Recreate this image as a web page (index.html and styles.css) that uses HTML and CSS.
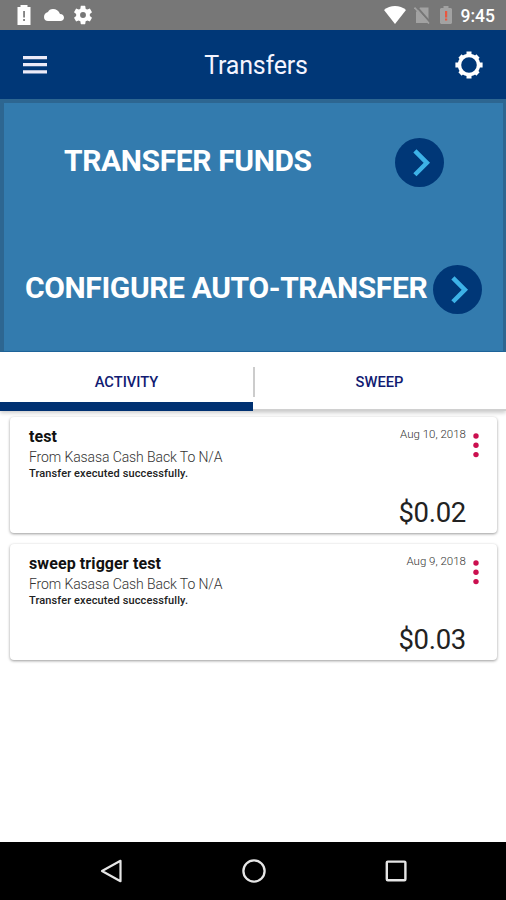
FILE: index.html
```html
<!DOCTYPE html>
<html lang="en">
<head>
  <meta charset="UTF-8">
  <meta name="viewport" content="width=device-width, initial-scale=1.0">
  <title>Transfers</title>
  <link rel="stylesheet" href="styles.css">
</head>
<body>
  <div class="status-bar">
    <div class="status-left">
      <svg width="14" height="20" viewBox="0 0 14 20"><path fill="#fff" d="M.5 2H3.500V0h7v2h3v18H.5z"/><path fill="#777" d="M6.200 6h1.700v6.500H6.200zM6.200 14h1.700v2H6.200z"/></svg>
      <svg width="20" height="12" viewBox="0 0 20 12"><path fill="#fff" d="M16 5C14.800 1.500 12 0 9 0 6.500 0 4.800 1.300 4 3 1.500 3.500 0 5.500 0 8c0 2.500 1.500 4 4 4h12.500c2 0 3.500-1.200 3.500-3.200C20 6.500 18.500 5 16 5z"/></svg>
      <svg width="22" height="22" viewBox="0 0 24 24"><path fill="#fff" d="M19.430 12.980c.04-.32.070-.64.070-.98s-.03-.66-.07-.98l2.110-1.650c.19-.15.240-.42.120-.64l-2-3.460c-.12-.22-.39-.3-.61-.22l-2.490 1c-.52-.4-1.080-.73-1.690-.98l-.38-2.650A.488.488 0 0 0 14 2h-4c-.25 0-.46.180-.49.420l-.38 2.650c-.61.250-1.170.590-1.690.980l-2.490-1c-.23-.09-.49 0-.61.220l-2 3.460c-.13.220-.07.490.120.640l2.110 1.650c-.04.320-.07.650-.07.980s.03.660.070.980l-2.110 1.650c-.19.150-.24.420-.12.640l2 3.460c.12.220.390.300.610.220l2.490-1c.52.400 1.080.730 1.690.980l.38 2.650c.03.240.240.420.490.420h4c.25 0 .46-.18.490-.42l.38-2.650c.61-.25 1.170-.59 1.690-.98l2.490 1c.23.090.490 0 .61-.22l2-3.460c.12-.22.070-.49-.12-.64l-2.110-1.650zM12 15.200a3.200 3.200 0 1 1 0-6.400 3.200 3.200 0 0 1 0 6.400z"/></svg>
    </div>
    <div class="status-right">
      <svg width="22" height="18" viewBox="0 0 22 18"><path fill="#fff" d="M0 4C6-1.300 16-1.300 22 4L11 18z"/></svg>
      <svg width="16" height="18" viewBox="0 0 16 18"><path fill="#a2a2a2" d="M6 1.500h8.500V17H2V6z"/><path stroke="#777" stroke-width="2" d="M2 0l14 16"/><path stroke="#a2a2a2" stroke-width="1.700" d="M.5 1.500l14.500 16"/></svg>
      <svg width="12" height="18" viewBox="0 0 12 18"><path fill="#a2a2a2" d="M1 2h2.500V0h5v2H11l1 1v14l-1 1H1l-1-1V3z"/><path fill="#e9573f" d="M5 5h2.200v6.500H5zM5 12.500h2.200v2H5z"/></svg>
      <span class="clock">9:45</span>
    </div>
  </div>

  <div class="header">
    <svg class="menu-icon" width="24" height="18" viewBox="0 0 24 18"><path fill="#ebeaf8" d="M0 0h24v3.200H0zM0 7.100h24v3.200H0zM0 14.200h24v3.200H0z"/></svg>
    <h1>Transfers</h1>
    <svg class="settings-icon" width="28" height="28" viewBox="0 0 28 28" fill="none" stroke="#fff">
      <circle cx="14" cy="14" r="9.500" stroke-width="3.400"/>
      <path stroke-width="5" d="M14 .4v3.600M14 24v3.600M.4 14h3.600M24 14h3.600"/>
      <path stroke-width="4.600" d="M5 5l2.500 2.500M20.500 20.500l2.500 2.500M23 5l-2.500 2.500M7.500 20.500L5 23"/>
    </svg>
  </div>

  <div class="actions">
    <div class="action action-transfer">
      <span class="action-label">TRANSFER FUNDS</span>
      <svg width="49" height="49" viewBox="0 0 48 48"><circle cx="24" cy="24" r="24" fill="#003777"/><path fill="none" stroke="#3db2e7" stroke-width="4.400" d="M19.500 12.700L31.200 24.300 19.500 36"/></svg>
    </div>
    <div class="action action-auto">
      <span class="action-label">CONFIGURE AUTO-TRANSFER</span>
      <svg width="49" height="49" viewBox="0 0 48 48"><circle cx="24" cy="24" r="24" fill="#003777"/><path fill="none" stroke="#3db2e7" stroke-width="4.400" d="M19.500 12.700L31.200 24.300 19.500 36"/></svg>
    </div>
  </div>

  <div class="tabs">
    <div class="tab active"><span>ACTIVITY</span></div>
    <div class="tab"><span>SWEEP</span></div>
  </div>

  <div class="list">
    <div class="card">
      <div class="card-info">
        <h2 class="name">test</h2>
        <p class="route">From Kasasa Cash Back To N/A</p>
        <p class="result">Transfer executed successfully.</p>
      </div>
      <div class="card-side">
        <span class="date">Aug 10, 2018</span>
        <span class="amount">$0.02</span>
      </div>
      <svg class="more" width="6" height="26" viewBox="0 0 6 26" fill="#cb0f4f"><circle cx="3" cy="3" r="2.700"/><circle cx="3" cy="12.300" r="2.700"/><circle cx="3" cy="21.600" r="2.700"/></svg>
    </div>
    <div class="card">
      <div class="card-info">
        <h2 class="name">sweep trigger test</h2>
        <p class="route">From Kasasa Cash Back To N/A</p>
        <p class="result">Transfer executed successfully.</p>
      </div>
      <div class="card-side">
        <span class="date">Aug 9, 2018</span>
        <span class="amount">$0.03</span>
      </div>
      <svg class="more" width="6" height="26" viewBox="0 0 6 26" fill="#cb0f4f"><circle cx="3" cy="3" r="2.700"/><circle cx="3" cy="12.300" r="2.700"/><circle cx="3" cy="21.600" r="2.700"/></svg>
    </div>
  </div>

  <div class="nav-bar">
    <svg width="24" height="24" viewBox="0 0 24 24" fill="none" stroke="#e6e6e6" stroke-width="2.200" stroke-linejoin="round"><path d="M20.500 1.800v20.400L2 12z"/></svg>
    <svg width="24" height="24" viewBox="0 0 24 24" fill="none" stroke="#e6e6e6" stroke-width="2.300"><circle cx="12" cy="12" r="10.600"/></svg>
    <svg width="24" height="24" viewBox="0 0 24 24" fill="none" stroke="#e6e6e6" stroke-width="2.400"><rect x="2.800" y="2.600" width="18.600" height="18.600" rx="1"/></svg>
  </div>
</body>
</html>
```
FILE: styles.css
```css
* {
  margin: 0;
  padding: 0;
  box-sizing: border-box;
}

body {
  font-family: Roboto, Arial, sans-serif;
  background: #fff;
  height: 900px;
  display: flex;
  flex-direction: column;
  overflow: hidden;
}

svg {
  display: block;
  flex: none;
}

.status-bar {
  height: 30px;
  flex: none;
  background: #777;
  display: flex;
  justify-content: space-between;
  align-items: center;
  padding: 0 11px 0 17px;
}

.status-left {
  display: flex;
  align-items: center;
  gap: 13px;
}

.status-left svg:last-child {
  margin-left: -5px;
}

.status-right {
  display: flex;
  align-items: center;
  gap: 9px;
}

.status-right svg:first-child {
  margin-right: -1px;
}

.status-right svg:nth-child(2) {
  margin-right: 1px;
}

.clock {
  color: #fff;
  font-size: 17.5px;
  font-weight: 500;
  line-height: 30px;
  padding-top: 2px;
}

.header {
  height: 69px;
  flex: none;
  background: #003777;
  display: flex;
  align-items: center;
  justify-content: space-between;
  padding: 0 23px;
}

.header h1 {
  color: #f4f4ff;
  font-size: 25px;
  font-weight: 400;
  letter-spacing: -0.2px;
  padding: 1px 0 0 10px;
}

.actions {
  height: 253px;
  flex: none;
  background: #337bae;
  border: 4px solid #2d6691;
  border-right-width: 3px;
  border-bottom: 1px solid #1e659d;
  display: flex;
  flex-direction: column;
  padding-top: 35px;
  gap: 78px;
}

.action {
  display: flex;
  justify-content: space-between;
  align-items: center;
}

.action-transfer {
  padding: 0 59px 0 60px;
}

.action-auto {
  padding: 0 21px 0 21px;
}

.action-label {
  color: #fff;
  font-size: 30px;
  font-weight: 700;
  letter-spacing: -0.38px;
  line-height: 46px;
  padding-bottom: 3px;
  white-space: nowrap;
}

.tabs {
  height: 59px;
  flex: none;
  display: flex;
  background: #fff;
  box-shadow: 0 2px 4px rgba(0,0,0,0.2);
}

.tab {
  flex: 1;
  display: flex;
  border-bottom: 2px solid #d0d0d0;
  padding: 15px 0;
}

.tab span {
  flex: 1;
  text-align: center;
  color: #111b72;
  font-size: 14.7px;
  font-weight: 500;
  line-height: 31px;
}

.tab.active {
  border-bottom: 9px solid #003172;
  padding-bottom: 5px;
}

.tab.active span {
  border-right: 2px solid #ccc;
  height: 30px;
  margin-right: -2px;
}

.list {
  flex: 1;
  padding: 6px 9px 0 10px;
}

.card {
  height: 116px;
  margin-bottom: 11px;
  border-radius: 4px;
  background: #fff;
  box-shadow: 0 1px 3px rgba(0,0,0,0.4);
  display: flex;
  padding: 10px 18px 0 19px;
}

.card-info {
  flex: 1;
}

.name {
  color: #111;
  font-size: 16px;
  font-weight: 700;
  letter-spacing: 0.1px;
  line-height: 20px;
}

.route {
  color: #333;
  font-size: 14px;
  font-weight: 300;
  letter-spacing: -0.1px;
  line-height: 20px;
}

.result {
  color: #222;
  font-size: 11px;
  font-weight: 500;
  letter-spacing: 0.12px;
  line-height: 14px;
}

.card-side {
  display: flex;
  flex-direction: column;
  align-items: flex-end;
  margin-right: 7px;
}

.date {
  color: #333;
  font-size: 11.5px;
  font-weight: 300;
  line-height: 14px;
}

.amount {
  color: #222;
  font-size: 27.5px;
  font-weight: 400;
  letter-spacing: -0.3px;
  line-height: 32px;
  margin-top: 56px;
}

.more {
  margin-top: 6px;
}

.nav-bar {
  height: 58px;
  flex: none;
  background: #000;
  display: flex;
  align-items: center;
  justify-content: center;
  gap: 118px;
  padding-left: 2px;
}
```
